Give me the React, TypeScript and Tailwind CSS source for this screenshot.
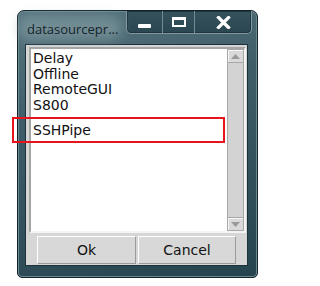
import React from 'react';

const items = ['Delay', 'Offline', 'RemoteGUI', 'S800'];

function CaptionButtons() {
  return (
    <div className="flex h-[23px] mr-[5px] rounded-b-[5px] border border-t-0 border-[#7f989f] bg-[linear-gradient(#35525d,#2a4651)] shadow-[inset_0_0_0_1px_#1e353e] overflow-hidden">
      <div className="w-[36px] flex items-end justify-center pb-[5px] border-r border-[#748d95]">
        <div className="w-[13px] h-[4px] bg-white rounded-[1px]" />
      </div>
      <div className="w-[32px] flex items-center justify-center border-r border-[#748d95]">
        <div className="w-[14px] h-[10px] border-2 border-t-[3px] border-white" />
      </div>
      <div className="w-[56px] flex items-center justify-center">
        <svg width="15" height="13" viewBox="0 0 15 13">
          <path d="M2.5 1.5 L12.5 11.5 M12.5 1.5 L2.5 11.5" stroke="white" strokeWidth="3.2" strokeLinecap="square" />
        </svg>
      </div>
    </div>
  );
}

export default function App() {
  return (
    <div className="relative w-[274px] h-[286px] bg-white pt-[10px] pl-[17px]">
      {/* window frame */}
      <div className="w-[241px] h-[268px] rounded-t-[7px] rounded-b-[5px] border border-[#10222a] bg-[linear-gradient(165deg,#587680_0%,#3f5d68_35%,#264450_100%)] shadow-[inset_0_0_0_1px_#6f8991]">
        <div className="flex justify-between h-[33px]">
          <div className="relative pl-[9px] pt-[10px] text-[13px] leading-[16px] text-[#13242b] font-['Open_Sans',sans-serif]">
            <div className="absolute left-[0px] top-[5px] w-[104px] h-[24px] rounded-full bg-[#93a9ae] opacity-50 blur-[6px]" />
            <span className="relative">datasourcepr...</span>
          </div>
          <CaptionButtons />
        </div>

        {/* client area */}
        <div className="ml-[7px] w-[223px] h-[222px] bg-[#d6d6d6] border border-[#1b313b] pt-[2px] pl-[3px]">
          <div className="w-[217px] h-[186px] border-2 border-t-[#a4a4a4] border-l-[#a4a4a4] border-r-[#f4f4f4] border-b-[#f4f4f4] flex">
            <div className="flex-1 bg-white pl-[2px] pt-[2px] font-['DejaVu_Sans',sans-serif] text-[14px] leading-[15.5px] text-[#111]">
              {items.map((it) => (
                <div key={it}>{it}</div>
              ))}
              <div className="mt-[10px]">SSHPipe</div>
            </div>
            <div className="w-[17px] bg-[#d3d3d3] border border-[#a8a8a8] flex flex-col justify-between">
              <div className="h-[13px] border-b border-[#a8a8a8] bg-[#d9d9d9] shadow-[inset_1px_1px_0_#f6f6f6] flex items-center justify-center">
                <svg width="9" height="5" viewBox="0 0 9 5"><path d="M0 5 L4.5 0 L9 5 Z" fill="#9a9a9a" /></svg>
              </div>
              <div className="h-[13px] border-t border-[#a8a8a8] bg-[#d9d9d9] shadow-[inset_1px_1px_0_#f6f6f6] flex items-center justify-center">
                <svg width="9" height="5" viewBox="0 0 9 5"><path d="M0 0 L4.5 5 L9 0 Z" fill="#9a9a9a" /></svg>
              </div>
            </div>
          </div>
          <div className="flex gap-[2px] mt-[3px] ml-[8px] font-['DejaVu_Sans',sans-serif] text-[14px] text-[#111]">
            <div className="w-[99px] h-[28px] flex items-center justify-center bg-[#d8d8d8] border border-t-white border-l-white border-r-[#9a9a9a] border-b-[#9a9a9a]">
              Ok
            </div>
            <div className="w-[98px] h-[28px] flex items-center justify-center bg-[#d8d8d8] border border-t-white border-l-white border-r-[#9a9a9a] border-b-[#9a9a9a]">
              Cancel
            </div>
          </div>
        </div>
      </div>

      {/* annotation */}
      <div className="absolute left-[12px] top-[117px] w-[213px] h-[26px] border-2 border-[#e8141b]" />
    </div>
  );
}
